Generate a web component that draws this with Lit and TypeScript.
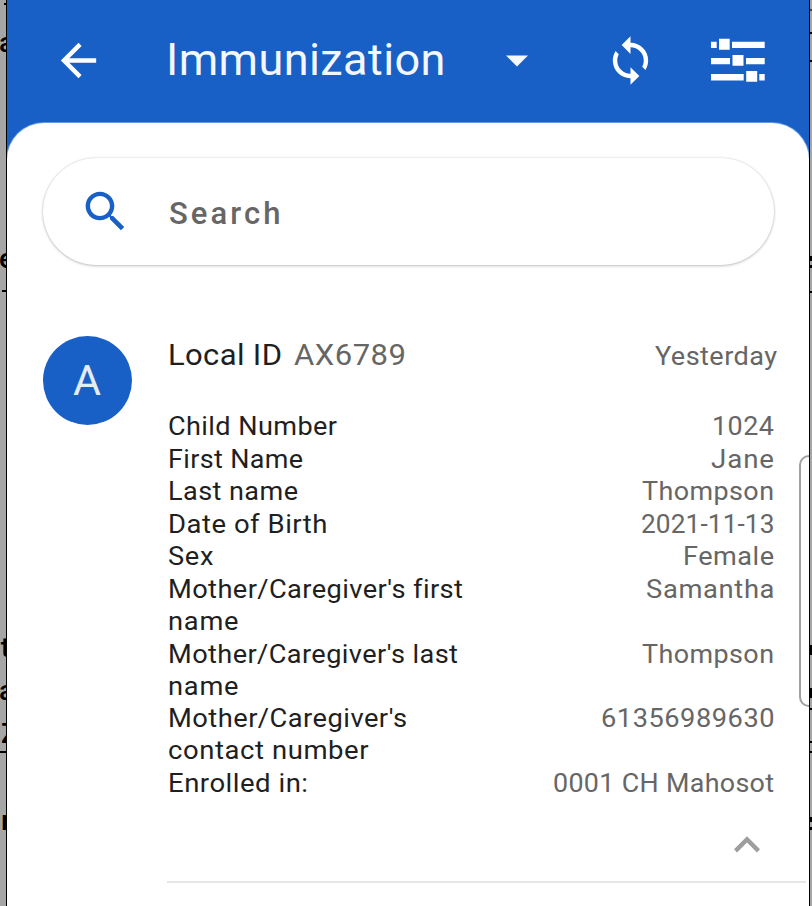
import { LitElement, html, css, svg } from "lit";
import { customElement, property } from "lit/decorators.js";

/** A line of text that takes up a given width, partly by tracking and partly by widening its letters. */
@customElement("fit-text")
class FitText extends LitElement {
  @property({ type: Number }) width = 0;
  @property({ type: Number }) tracking = 0.4;
  @property() text = "";

  static styles = css`
    :host { display: block; white-space: nowrap; }
    .text { display: inline-block; transform-origin: 0 50%; }
  `;

  updated() {
    const el = this.renderRoot.querySelector(".text") as HTMLElement;
    el.style.letterSpacing = "0";
    el.style.transform = "none";
    const gaps = this.text.length - 1;
    const natural = el.getBoundingClientRect().width;
    const spacing = ((this.width - natural) * this.tracking) / gaps;
    this.style.width = `${this.width}px`;
    el.style.letterSpacing = `${spacing}px`;
    el.style.transform = `scaleX(${this.width / (natural + spacing * gaps)})`;
  }

  render() {
    return html`<span class="text">${this.text}</span>`;
  }
}

type Line = [string, number];
interface Row { label: Line[]; value: Line; }

const rows: Row[] = [
  { label: [["Child Number", 169]], value: ["1024", 62] },
  { label: [["First Name", 135]], value: ["Jane", 63] },
  { label: [["Last name", 130]], value: ["Thompson", 132] },
  { label: [["Date of Birth", 159.5]], value: ["2021-11-13", 133.5] },
  { label: [["Sex", 45.5]], value: ["Female", 91] },
  { label: [["Mother/Caregiver's first", 294]], value: ["Samantha", 128.5] },
  { label: [["Mother/Caregiver's last", 290]], value: ["Thompson", 132] },
  { label: [["Mother/Caregiver's", 239], ["contact number", 200.5]], value: ["61356989630", 173.5] },
  { label: [["Enrolled in:", 140]], value: ["0001 CH Mahosot", 221] },
];
rows[5].label.push(["name", 70.5]);
rows[6].label.push(["name", 70.5]);

const icon = (d: string) => html`<svg class="icon" viewBox="0 0 24 24">${svg`<path d=${d} fill="currentColor"></path>`}</svg>`;
const fit = ([text, width]: Line) => html`<fit-text .text=${text} .width=${width}></fit-text>`;

@customElement("app-root")
class AppRoot extends LitElement {
  static styles = css`
    :host {
      display: flex; width: 812px; height: 906px; overflow: hidden;
      font-family: Roboto, "Noto Sans", sans-serif; background: #000;
    }
    .strip { position: relative; overflow: hidden; background: #a6a6a6; color: #000; flex: none; }
    .left { width: 6px; margin-right: 1px; }
    .right { width: 2px; margin-left: 1px; }
    .peek { position: absolute; right: -8px; font-size: 28px; line-height: 30px; font-weight: 500; }
    .p1 { top: 28px; } .p2 { top: 244px; } .p3 { top: 633px; right: -4px; }
    .p4 { top: 676px; } .p5 { top: 719px; right: -12px; } .p6 { top: 806px; right: -5px; }
    .mark { position: absolute; left: 0; width: 6px; height: 2px; background: #000; }
    .m1 { top: 3px; left: 4px; } .m2 { top: 290px; left: 2px; } .m3 { top: 751px; }
    .n1 { top: 9px; background: #444; } .n2 { top: 32px; } .n3 { top: 60px; }
    .n4 { top: 256px; height: 5px; } .n5 { top: 265px; height: 3px; } .n6 { top: 291px; }
    .n7 { top: 645px; height: 10px; border-radius: 0 2px 2px 0; }
    .n8 { top: 688px; height: 10px; border-radius: 0 2px 2px 0; }
    .n9 { top: 708px; } .n10 { top: 741px; } .n11 { top: 751px; }
    .n12 { top: 817px; height: 5px; } .n13 { top: 827px; height: 3px; }

    .phone { position: relative; width: 802px; flex: none; background: #185fc6; overflow: hidden; display: flex; flex-direction: column; }
    .bar { height: 123px; flex: none; display: flex; align-items: center; color: #fff; box-sizing: border-box; padding: 0 0 3px 44.5px; }
    .icon { width: 53px; height: 53px; display: block; flex: none; }
    .title { width: 279.5px; margin-left: 61px; font-size: 44px; line-height: 52px; color: #f3f7fd; }
    .caret { width: 22px; height: 12px; margin-left: 61px; margin-top: 2px; }
    .sync { margin-left: 75.5px; }
    .filter { width: 54px; height: 44px; margin-left: 54px; margin-top: -1px; }

    .sheet { flex: 1; background: #fff; border-radius: 37px 37px 0 0; padding: 35px 0 0 35px; box-shadow: 0 0 0 1px #5f99e4; }
    .search {
      display: flex; align-items: center; width: 731.5px; height: 107px; box-sizing: border-box;
      border-radius: 54px; padding-left: 36.5px; background: #fff; color: #185fc6; margin-left: .5px;
      box-shadow: 0 1px 3px rgba(0,0,0,.22), 0 0 2px rgba(0,0,0,.16);
    }
    .hint { margin-left: 37px; margin-top: 4px; font-size: 31px; line-height: 38px; font-weight: 500; color: #666; }
    .card { display: flex; margin-top: 71px; }
    .avatar {
      width: 89px; height: 89px; border-radius: 50%; background: #185fc6; color: #e3ecf9; box-sizing: border-box; padding-bottom: 2px;
      font-size: 43px; display: flex; align-items: center; justify-content: center; flex: none; margin-left: .5px;
    }
    .body { margin-left: 36px; width: 638px; }
    .head { display: flex; align-items: baseline; width: 609px; height: 74px; margin-top: -1px; margin-bottom: 1px; }
    .name { font-size: 30px; line-height: 40px; color: #1f1f1f; }
    .id { font-size: 30px; margin-left: 12px; color: #666; }
    .when { font-size: 26px; margin-left: auto; color: #666; }
    .rows { display: flex; flex-direction: column; gap: .6px; width: 606.5px; font-size: 26px; line-height: 32px; }
    .row { display: flex; justify-content: space-between; }
    .label { color: #1f1f1f; }
    .value { color: #666; }
    .fold { display: flex; justify-content: flex-end; width: 605px; color: #9e9e9e; margin-top: 20px; }
    .fold .icon { width: 52px; height: 52px; }
    .line { height: 2px; background: #e6e6e6; margin-top: 10px; margin-left: -.5px; }
    .handle {
      position: absolute; left: 792px; top: 455px; width: 20px; height: 252px; box-sizing: border-box;
      border: 2px solid #a0a0a0; border-radius: 11px;
    }
  `;

  render() {
    return html`
      <div class="strip left">
        <i class="mark m1"></i><i class="mark m2"></i><i class="mark m3"></i>
        <span class="peek p1">a</span><span class="peek p2">e</span><span class="peek p3">t</span>
        <span class="peek p4">a</span><span class="peek p5">Z</span><span class="peek p6">r</span>
      </div>
      <main class="phone">
        <header class="bar">
          ${icon("M20 11H7.83l5.59-5.59L12 4l-8 8 8 8 1.41-1.41L7.83 13H20v-2z")}
          <div class="title">${fit(["Immunization", 279.5])}</div>
          <svg class="caret" viewBox="0 0 22 12"><path d="M0 .5h22L11 11.5z" fill="#f5f8fd"></path></svg>
          <div class="sync">${icon("M12 4V1L8 5l4 4V6c3.31 0 6 2.69 6 6 0 1.01-.25 1.97-.7 2.8l1.46 1.46C19.54 15.03 20 13.57 20 12c0-4.42-3.58-8-8-8zm0 14c-3.31 0-6-2.69-6-6 0-1.01.25-1.97.7-2.8L5.24 7.74C4.46 8.97 4 10.43 4 12c0 4.42 3.58 8 8 8v3l4-4-4-4v3z")}</div>
          <svg class="filter" viewBox="0 0 54 44">
            <path fill="#fff" d="M0 3.7h5.7V10H0zM8 .7h10.7v11H8zM21 3.7h32.7V10H21zM0 20h19v6.3H0zM21.5 17h11v10.7h-11zM35 20h18.7v6.3H35zM0 36h32.7v6.5H0zM35.2 33h11v10.7h-11zM48.3 36h5.4v6.5h-5.4z"></path>
          </svg>
        </header>
        <section class="sheet">
          <div class="search">
            ${icon("M15.5 14h-.79l-.28-.27C15.41 12.59 16 11.11 16 9.5 16 5.91 13.09 3 9.5 3S3 5.91 3 9.5 5.91 16 9.5 16c1.61 0 3.09-.59 4.23-1.57l.27.28v.79l5 4.99L20.49 19l-4.99-5zm-6 0C7.01 14 5 11.99 5 9.5S7.01 5 9.5 5 14 7.01 14 9.5 11.99 14 9.5 14z")}
            <div class="hint"><fit-text .text=${"Search"} .width=${111.5} .tracking=${1}></fit-text></div>
          </div>
          <article class="card">
            <div class="avatar">A</div>
            <div class="body">
              <div class="head">
                <div class="name">${fit(["Local ID", 114])}</div>
                <div class="id">${fit(["AX6789", 112])}</div>
                <div class="when">${fit(["Yesterday", 122])}</div>
              </div>
              <div class="rows">
                ${rows.map((r) => html`
                  <div class="row">
                    <div class="label">${r.label.map(fit)}</div>
                    <div class="value">${fit(r.value)}</div>
                  </div>`)}
              </div>
              <div class="fold">${icon("M12 8l-6 6 1.41 1.41L12 10.83l4.59 4.58L18 14z")}</div>
              <div class="line"></div>
            </div>
          </article>
        </section>
        <div class="handle"></div>
      </main>
      <div class="strip right">
        ${Array.from({ length: 13 }, (_, i) => html`<i class="mark n${i + 1}"></i>`)}
      </div>
    `;
  }
}
